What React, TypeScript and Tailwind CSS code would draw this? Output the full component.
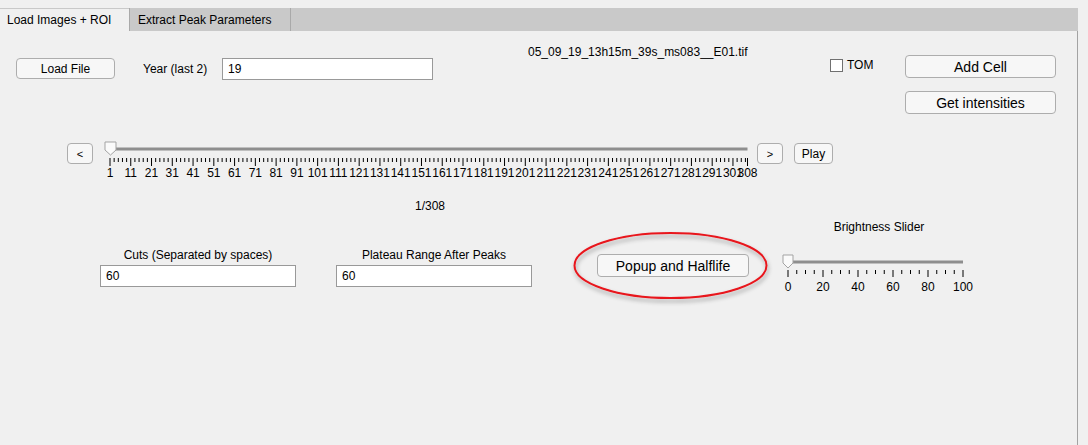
const FONT = "font-['Liberation_Sans',Arial,sans-serif]";

function MButton({ label, className }: { label: string; className: string }) {
  return (
    <div
      className={`flex items-center justify-center rounded-[4px] border border-[#adadad] bg-[#f7f7f7] text-black ${className}`}
    >
      {label}
    </div>
  );
}

function Field({ value, className }: { value: string; className: string }) {
  return (
    <div className={`flex items-center border border-[#999999] bg-white pl-[5px] text-[12px] ${className}`}>
      {value}
    </div>
  );
}

// frame slider, 1..308
function FrameSlider() {
  const x = (v: number) => 10 + ((v - 1) * 637.5) / 307;
  const minor: number[] = [];
  for (let v = 3; v < 308; v += 2) if ((v - 1) % 10 !== 0) minor.push(v);
  const major: number[] = [];
  for (let v = 1; v <= 301; v += 10) major.push(v);
  major.push(308);
  return (
    <svg width="656" height="40" className="ml-[7px] shrink-0 overflow-visible">
      <line x1="10" y1="9" x2="647.5" y2="9" stroke="#8e8e8e" strokeWidth="3" />
      {minor.map((v) => (
        <line key={`m${v}`} x1={x(v)} y1="18" x2={x(v)} y2="22" stroke="#000" strokeWidth="1" />
      ))}
      {major.map((v) => (
        <line key={`M${v}`} x1={x(v)} y1="18" x2={x(v)} y2="26" stroke="#000" strokeWidth="1" />
      ))}
      {major.map((v) => (
        <text
          key={`t${v}`}
          x={x(v)}
          y="37"
          textAnchor="middle"
          fontSize="12"
          fontFamily="'Liberation Sans', Arial, sans-serif"
          fill="#000"
        >
          {v}
        </text>
      ))}
      <polygon points="5,2 16,2 16,10 10.5,15 5,10" fill="#fafafa" stroke="#a3a3a3" strokeWidth="1" />
    </svg>
  );
}

function BrightnessSlider() {
  const x = (v: number) => 8 + v * 1.75;
  const minor: number[] = [];
  for (let v = 5; v < 100; v += 5) if (v % 20 !== 0) minor.push(v);
  const major = [0, 20, 40, 60, 80, 100];
  return (
    <svg width="196" height="45" className="mt-[16px] overflow-visible">
      <line x1="8" y1="12" x2="183" y2="12" stroke="#8e8e8e" strokeWidth="3" />
      {minor.map((v) => (
        <line key={`m${v}`} x1={x(v)} y1="20" x2={x(v)} y2="24" stroke="#000" strokeWidth="1" />
      ))}
      {major.map((v) => (
        <line key={`M${v}`} x1={x(v)} y1="20" x2={x(v)} y2="27" stroke="#000" strokeWidth="1" />
      ))}
      {major.map((v) => (
        <text
          key={`t${v}`}
          x={x(v)}
          y="41"
          textAnchor="middle"
          fontSize="12"
          fontFamily="'Liberation Sans', Arial, sans-serif"
          fill="#000"
        >
          {v}
        </text>
      ))}
      <polygon points="3,5 13,5 13,13 8,18 3,13" fill="#fafafa" stroke="#a3a3a3" strokeWidth="1" />
    </svg>
  );
}

export default function App() {
  return (
    <div className={`w-[1088px] h-[445px] overflow-hidden bg-[#f0f0f0] pt-[8px] text-[12px] leading-[14px] text-black ${FONT}`}>
      {/* tabs */}
      <div className="flex h-[23px] w-[1078px] bg-[#c9c9c9]">
        <div className="mt-[1px] flex h-[22px] w-[129px] items-center bg-[#f0f0f0] pl-[7px]">Load Images + ROI</div>
        <div className="flex h-[23px] w-[162px] items-center border-x border-[#a9a9a9] pl-[8px]">
          Extract Peak Parameters
        </div>
      </div>

      <div className="relative flex h-[414px] w-[1078px] flex-col border-r border-[#a3a3a3]">
        {/* top row */}
        <div className="flex h-[109px] items-start">
          <MButton label="Load File" className="ml-[16px] mt-[27px] h-[21px] w-[99px] text-[12px]" />
          <span className="ml-[28px] mt-[31px] w-[79px]">Year (last 2)</span>
          <Field value="19" className="mt-[27px] h-[22px] w-[211px]" />
          <span className="ml-[95px] mt-[14px] w-[302px]">05_09_19_13h15m_39s_ms083__E01.tif</span>
          <div className="mt-[27px] flex w-[75px] items-center">
            <div className="h-[13px] w-[13px] border border-[#707070] bg-white" />
            <span className="ml-[4px]">TOM</span>
          </div>
          <div className="mt-[24px] flex w-[151px] flex-col gap-[13px]">
            <MButton label="Add Cell" className="h-[23px] text-[14px]" />
            <MButton label="Get intensities" className="h-[23px] text-[14px]" />
          </div>
        </div>

        {/* frame slider row */}
        <div className="flex h-[40px] items-start">
          <MButton label="<" className="ml-[67px] mt-[3px] h-[21px] w-[26px] text-[11px]" />
          <FrameSlider />
          <MButton label=">" className="ml-[1px] mt-[3px] h-[21px] w-[26px] text-[11px]" />
          <MButton label="Play" className="ml-[11px] mt-[3px] h-[21px] w-[39px] text-[12px]" />
        </div>

        <div className="ml-[415px] mt-[19px]">1/308</div>

        {/* bottom controls */}
        <div className="flex items-start">
          <div className="ml-[100px] mt-[35px] flex w-[196px] flex-col items-center">
            <span>Cuts (Separated by spaces)</span>
            <Field value="60" className="mt-[3px] h-[22px] w-[196px]" />
          </div>
          <div className="ml-[40px] mt-[35px] flex w-[196px] flex-col items-center">
            <span>Plateau Range After Peaks</span>
            <Field value="60" className="mt-[3px] h-[22px] w-[196px]" />
          </div>
          <MButton label="Popup and Halflife" className="ml-[65px] mt-[41px] h-[23px] w-[152px] text-[14px]" />
          <div className="ml-[31px] mt-[7px] flex w-[196px] flex-col items-center">
            <span className="pl-[2px]">Brightness Slider</span>
            <BrightnessSlider />
          </div>
        </div>

        {/* red annotation ellipse */}
        <svg width="210" height="110" className="pointer-events-none absolute left-[568px] top-[197px]">
          <defs>
            <filter id="sh" x="-20%" y="-30%" width="140%" height="170%">
              <feDropShadow dx="1" dy="3" stdDeviation="2" floodColor="#000" floodOpacity="0.35" />
            </filter>
          </defs>
          <ellipse cx="102.5" cy="37.5" rx="96" ry="32.5" fill="none" stroke="#e8141b" strokeWidth="2" filter="url(#sh)" />
        </svg>
      </div>
    </div>
  );
}
